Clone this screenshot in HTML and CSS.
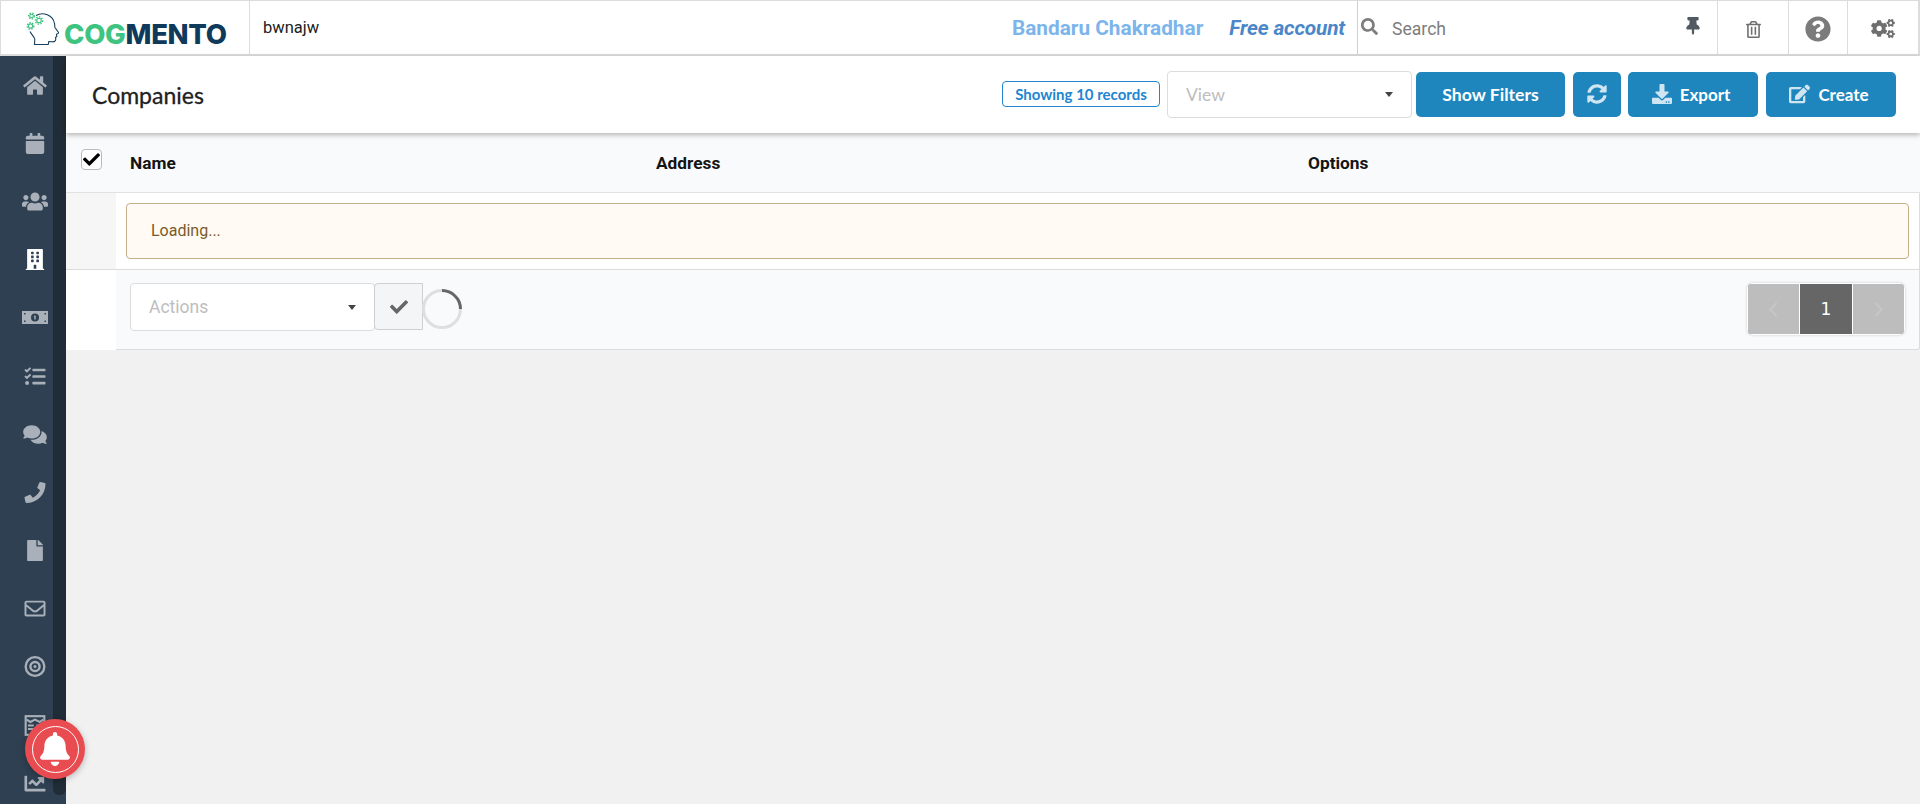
FILE: index.html
```html
<!DOCTYPE html>
<html lang="en">
<head>
<meta charset="utf-8">
<title>Companies - Cogmento</title>
<link rel="stylesheet" href="styles.css">
</head>
<body>
<header class="topbar">
  <div class="brand">
    <svg class="brand-icon" viewBox="0 0 34 34"><path class="head" d="M10 3.500C17-.5 27 3 28.500 11.500c.5 2 0 3 .5 4l3.500 5c.3 1-1.500 1.500-2 1.800l.3 2.200-1.300 1 .3 1.500c0 2-1.500 3-3.500 2.800l-3.500-.3-.6 3H8.500l.3-5.500C8.500 25 5.800 23 4 19.500"/><g class="gear-teeth-g"><circle cx="5.500" cy="4" r="2.900"/><circle cx="13" cy="8.500" r="3.700"/><circle cx="4.500" cy="14" r="3.300"/></g><g class="gear-ring"><circle cx="5.500" cy="4" r="1.800"/><circle cx="13" cy="8.500" r="2.300"/><circle cx="4.500" cy="14" r="2.100"/></g></svg>
    <span class="brand-name"><span class="cog">COG</span><span class="mento">MENTO</span></span>
  </div>
  <div class="workspace">bwnajw</div>
  <div class="account">
    <span class="user-name">Bandaru Chakradhar</span>
    <span class="plan">Free account</span>
  </div>
  <div class="search">
    <svg class="search-icon" viewBox="0 0 512 512"><path d="M505 442.700L405.300 343c-4.500-4.500-10.600-7-17-7H372c27.600-35.300 44-79.700 44-128C416 93.100 322.900 0 208 0S0 93.100 0 208s93.100 208 208 208c48.300 0 92.700-16.400 128-44v16.300c0 6.400 2.500 12.500 7 17l99.700 99.700c9.400 9.400 24.600 9.400 33.900 0l28.300-28.300c9.400-9.400 9.400-24.600.1-34zM208 336c-70.700 0-128-57.200-128-128 0-70.700 57.200-128 128-128 70.700 0 128 57.200 128 128 0 70.700-57.200 128-128 128z"/></svg>
    <span class="search-text">Search</span>
    <svg class="pin-icon" viewBox="0 0 384 512"><path d="M298.028 214.267L285.793 96H328c13.255 0 24-10.745 24-24V24c0-13.255-10.745-24-24-24H56C42.745 0 32 10.745 32 24v48c0 13.255 10.745 24 24 24h42.207L85.972 214.267C37.465 236.820 0 277.261 0 328c0 13.255 10.745 24 24 24h136v104.007c0 1.242.289 2.467.845 3.578l24 48c2.941 5.882 11.364 5.893 14.310 0l24-48a8.008 8.008 0 0 0 .845-3.578V352h136c13.255 0 24-10.745 24-24-.001-51.183-37.983-91.420-85.972-113.733z"/></svg>
  </div>
  <div class="tool tool-trash"><svg class="trash-icon" viewBox="0 0 448 512"><path d="M268 416h24a12 12 0 0 0 12-12V188a12 12 0 0 0-12-12h-24a12 12 0 0 0-12 12v216a12 12 0 0 0 12 12zM432 80h-82.410l-34-56.700A48 48 0 0 0 274.410 0H173.590a48 48 0 0 0-41.160 23.300L98.410 80H16A16 16 0 0 0 0 96v16a16 16 0 0 0 16 16h16v336a48 48 0 0 0 48 48h288a48 48 0 0 0 48-48V128h16a16 16 0 0 0 16-16V96a16 16 0 0 0-16-16zM171.840 50.910A6 6 0 0 1 177 48h94a6 6 0 0 1 5.150 2.910L293.610 80H154.390zM368 464H80V128h288zm-212-48h24a12 12 0 0 0 12-12V188a12 12 0 0 0-12-12h-24a12 12 0 0 0-12 12v216a12 12 0 0 0 12 12z"/></svg></div>
  <div class="tool tool-help"><svg class="help-icon" viewBox="0 0 512 512"><path d="M504 256c0 136.997-111.043 248-248 248S8 392.997 8 256C8 119.083 119.043 8 256 8s248 111.083 248 248zM262.655 90c-54.497 0-89.255 22.957-116.549 63.758-3.536 5.286-2.353 12.415 2.715 16.258l34.699 26.310c5.205 3.947 12.621 3.008 16.665-2.122 17.864-22.658 30.113-35.797 57.303-35.797 20.429 0 45.698 13.148 45.698 32.958 0 14.976-12.363 22.667-32.534 33.976C247.128 238.528 216 254.941 216 296v4c0 6.627 5.373 12 12 12h56c6.627 0 12-5.373 12-12v-1.333c0-28.462 83.186-29.647 83.186-106.667 0-58.002-60.165-102-116.531-102zM256 338c-25.365 0-46 20.635-46 46 0 25.364 20.635 46 46 46s46-20.636 46-46c0-25.365-20.635-46-46-46z"/></svg></div>
  <div class="tool tool-gears"><svg class="gears-icon" viewBox="0 0 640 512"><path d="M512.100 191l-8.200 14.300c-3 5.300-9.400 7.500-15.100 5.400-11.800-4.400-22.600-10.700-32.100-18.600-4.600-3.800-5.800-10.500-2.800-15.700l8.200-14.300c-6.900-8-12.300-17.300-15.900-27.400h-16.500c-6 0-11.200-4.300-12.200-10.300-2-12-2.100-24.600 0-37.100 1-6 6.200-10.400 12.200-10.400h16.500c3.600-10.100 9-19.400 15.900-27.400l-8.200-14.300c-3-5.200-1.900-11.900 2.800-15.700 9.500-7.900 20.400-14.200 32.100-18.600 5.700-2.100 12.100.1 15.100 5.400l8.200 14.300c10.500-1.900 21.200-1.900 31.700 0L552 6.300c3-5.300 9.400-7.500 15.100-5.400 11.800 4.400 22.600 10.700 32.100 18.600 4.600 3.800 5.800 10.500 2.800 15.700l-8.200 14.300c6.900 8 12.300 17.300 15.900 27.400h16.500c6 0 11.200 4.300 12.200 10.300 2 12 2.100 24.600 0 37.100-1 6-6.200 10.400-12.200 10.400h-16.500c-3.600 10.100-9 19.400-15.900 27.400l8.200 14.300c3 5.200 1.900 11.900-2.800 15.700-9.500 7.900-20.400 14.200-32.100 18.600-5.700 2.100-12.100-.1-15.100-5.400l-8.200-14.300c-10.400 1.900-21.200 1.900-31.700 0zm-10.500-58.800c38.500 29.600 82.400-14.300 52.800-52.800-38.500-29.700-82.400 14.300-52.800 52.800zM386.300 286.100l33.700 16.800c10.100 5.800 14.500 18.100 10.500 29.100-8.900 24.200-26.400 46.400-42.600 65.800-7.400 8.900-20.200 11.100-30.300 5.300l-29.100-16.800c-16 13.700-34.600 24.600-54.900 31.700v33.600c0 11.600-8.300 21.600-19.700 23.600-24.600 4.200-50.400 4.400-75.900 0-11.500-2-20-11.900-20-23.600V418c-20.300-7.200-38.900-18-54.900-31.700L74 403c-10 5.800-22.900 3.600-30.300-5.300-16.200-19.400-33.300-41.600-42.200-65.700-4-10.900.4-23.200 10.500-29.100l33.300-16.800c-3.900-20.900-3.900-42.400 0-63.400L12 205.800c-10.100-5.800-14.600-18.100-10.500-29 8.900-24.200 26-46.400 42.200-65.800 7.400-8.900 20.200-11.100 30.300-5.300l29.100 16.800c16-13.700 34.600-24.600 54.900-31.700V57.100c0-11.500 8.200-21.500 19.600-23.500 24.600-4.200 50.500-4.400 76-.1 11.500 2 20 11.900 20 23.600v33.600c20.300 7.200 38.900 18 54.900 31.700l29.100-16.800c10-5.800 22.900-3.600 30.300 5.300 16.200 19.400 33.200 41.600 42.100 65.800 4 10.900.1 23.200-10 29.100l-33.700 16.800c3.900 21 3.900 42.500 0 63.500zm-117.600 21.100c59.200-77-28.700-164.900-105.700-105.700-59.200 77 28.700 164.900 105.700 105.700zm243.400 182.700l-8.200 14.300c-3 5.300-9.400 7.500-15.100 5.400-11.800-4.400-22.600-10.700-32.100-18.600-4.600-3.800-5.800-10.500-2.800-15.700l8.200-14.300c-6.900-8-12.300-17.300-15.900-27.400h-16.500c-6 0-11.200-4.300-12.200-10.300-2-12-2.100-24.600 0-37.100 1-6 6.200-10.400 12.200-10.400h16.500c3.600-10.100 9-19.400 15.900-27.400l-8.200-14.300c-3-5.200-1.900-11.900 2.800-15.700 9.500-7.900 20.400-14.200 32.100-18.600 5.700-2.100 12.100.1 15.100 5.400l8.200 14.300c10.500-1.900 21.200-1.900 31.700 0l8.200-14.300c3-5.300 9.400-7.500 15.100-5.400 11.800 4.400 22.600 10.700 32.100 18.600 4.600 3.800 5.800 10.500 2.800 15.700l-8.200 14.300c6.900 8 12.300 17.300 15.900 27.400h16.500c6 0 11.200 4.300 12.200 10.300 2 12 2.100 24.600 0 37.100-1 6-6.200 10.400-12.200 10.400h-16.500c-3.600 10.100-9 19.400-15.900 27.400l8.200 14.300c3 5.200 1.900 11.900-2.800 15.700-9.500 7.900-20.400 14.200-32.100 18.600-5.700 2.100-12.100-.1-15.100-5.400l-8.200-14.300c-10.400 1.900-21.200 1.900-31.700 0zM501.600 431c38.500 29.600 82.400-14.300 52.800-52.800-38.500-29.600-82.400 14.300-52.800 52.800z"/></svg></div>
</header>

<div class="shell">
  <nav class="sidebar">
    <div class="rail">
      <a class="nav-item"><svg class="nav-icon" viewBox="0 0 576 512"><path d="M280.370 148.260L96 300.110V464a16 16 0 0 0 16 16l112.060-.29a16 16 0 0 0 15.920-16V368a16 16 0 0 1 16-16h64a16 16 0 0 1 16 16v95.640a16 16 0 0 0 16 16.050L464 480a16 16 0 0 0 16-16V300L295.670 148.260a12.190 12.190 0 0 0-15.300 0zM571.600 251.470L488 182.560V44.050a12 12 0 0 0-12-12h-56a12 12 0 0 0-12 12v72.610L318.470 43a48 48 0 0 0-61 0L4.340 251.470a12 12 0 0 0-1.600 16.900l25.500 31A12 12 0 0 0 45.150 301l235.220-193.740a12.190 12.190 0 0 1 15.300 0L530.900 301a12 12 0 0 0 16.900-1.600l25.500-31a12 12 0 0 0-1.700-16.930z"/></svg></a>
      <a class="nav-item"><svg class="nav-icon" viewBox="0 0 448 512"><path d="M12 192h424c6.600 0 12 5.400 12 12v260c0 26.500-21.500 48-48 48H48c-26.500 0-48-21.500-48-48V204c0-6.600 5.400-12 12-12zm436-44v-36c0-26.500-21.500-48-48-48h-48V12c0-6.600-5.400-12-12-12h-40c-6.600 0-12 5.400-12 12v52H160V12c0-6.600-5.400-12-12-12h-40c-6.600 0-12 5.400-12 12v52H48C21.500 64 0 85.500 0 112v36c0 6.600 5.400 12 12 12h424c6.600 0 12-5.400 12-12z"/></svg></a>
      <a class="nav-item"><svg class="nav-icon nav-wide" viewBox="0 0 640 512"><path d="M96 224c35.300 0 64-28.700 64-64s-28.700-64-64-64-64 28.700-64 64 28.700 64 64 64zm448 0c35.300 0 64-28.700 64-64s-28.700-64-64-64-64 28.700-64 64 28.700 64 64 64zm32 32h-64c-17.600 0-33.500 7.100-45.100 18.600 40.300 22.100 68.900 62 75.100 109.400h66c17.700 0 32-14.300 32-32v-32c0-35.300-28.700-64-64-64zm-256 0c61.900 0 112-50.100 112-112S381.900 32 320 32 208 82.100 208 144s50.100 112 112 112zm76.800 32h-8.300c-20.800 10-43.900 16-68.500 16s-47.600-6-68.500-16h-8.300C179.600 288 128 339.600 128 403.200V432c0 26.500 21.500 48 48 48h288c26.500 0 48-21.500 48-48v-28.800c0-63.600-51.600-115.200-115.200-115.200zm-223.700-13.400C161.500 263.100 145.600 256 128 256H64c-35.300 0-64 28.700-64 64v32c0 17.700 14.300 32 32 32h65.900c6.300-47.400 34.900-87.300 75.200-109.400z"/></svg></a>
      <a class="nav-item"><svg class="nav-icon nav-active" viewBox="0 0 448 512"><path d="M436 480h-20V24c0-13.255-10.745-24-24-24H56C42.745 0 32 10.745 32 24v456H12c-6.627 0-12 5.373-12 12v20h448v-20c0-6.627-5.373-12-12-12zM128 76c0-6.627 5.373-12 12-12h40c6.627 0 12 5.373 12 12v40c0 6.627-5.373 12-12 12h-40c-6.627 0-12-5.373-12-12V76zm0 96c0-6.627 5.373-12 12-12h40c6.627 0 12 5.373 12 12v40c0 6.627-5.373 12-12 12h-40c-6.627 0-12-5.373-12-12v-40zm52 148h-40c-6.627 0-12-5.373-12-12v-40c0-6.627 5.373-12 12-12h40c6.627 0 12 5.373 12 12v40c0 6.627-5.373 12-12 12zm76 160h-64v-84c0-6.627 5.373-12 12-12h40c6.627 0 12 5.373 12 12v84zm64-172c0 6.627-5.373 12-12 12h-40c-6.627 0-12-5.373-12-12v-40c0-6.627 5.373-12 12-12h40c6.627 0 12 5.373 12 12v40zm0-96c0 6.627-5.373 12-12 12h-40c-6.627 0-12-5.373-12-12v-40c0-6.627 5.373-12 12-12h40c6.627 0 12 5.373 12 12v40zm0-96c0 6.627-5.373 12-12 12h-40c-6.627 0-12-5.373-12-12V76c0-6.627 5.373-12 12-12h40c6.627 0 12 5.373 12 12v40z"/></svg></a>
      <a class="nav-item"><svg class="nav-icon nav-wide" viewBox="0 0 26 13"><path fill-rule="evenodd" d="M0 0h26v13H0zM2 2v1.500h1.500V2zM22.500 2v1.500H24V2zM2 9.500V11h1.500V9.500zM22.500 9.500V11H24V9.500zM13 2.500a4 4 0 1 0 0 8 4 4 0 0 0 0-8zM12.500 4.500h1.200v4h-1.400V5.700l-.8.200z"/></svg></a>
      <a class="nav-item"><svg class="nav-icon" viewBox="0 0 512 512"><path d="M139.610 35.500a12 12 0 0 0-17 0L58.930 98.810l-22.700-22.120a12 12 0 0 0-17 0L3.530 92.410a12 12 0 0 0 0 17l47.590 47.400a12.780 12.780 0 0 0 17.610 0l15.590-15.620L156.520 69a12.090 12.090 0 0 0 .090-17zm0 159.190a12 12 0 0 0-17 0l-63.680 63.720-22.700-22.100a12 12 0 0 0-17 0L3.530 252a12 12 0 0 0 0 17L51 316.500a12.770 12.770 0 0 0 17.600 0l15.700-15.690 72.200-72.220a12 12 0 0 0 .090-16.900zM64 368c-26.490 0-48.590 21.500-48.590 48S37.530 464 64 464a48 48 0 0 0 0-96zm432 16H208a16 16 0 0 0-16 16v32a16 16 0 0 0 16 16h288a16 16 0 0 0 16-16v-32a16 16 0 0 0-16-16zm0-320H208a16 16 0 0 0-16 16v32a16 16 0 0 0 16 16h288a16 16 0 0 0 16-16V80a16 16 0 0 0-16-16zm0 160H208a16 16 0 0 0-16 16v32a16 16 0 0 0 16 16h288a16 16 0 0 0 16-16v-32a16 16 0 0 0-16-16z"/></svg></a>
      <a class="nav-item"><svg class="nav-icon" viewBox="0 0 576 512"><path d="M416 192c0-88.400-93.100-160-208-160S0 103.600 0 192c0 34.300 14.100 65.900 38 92-13.400 30.200-35.500 54.200-35.800 54.500-2.200 2.300-2.800 5.700-1.500 8.700S4.800 352 8 352c36.600 0 66.900-12.300 88.700-25 32.200 15.700 70.300 25 111.300 25 114.900 0 208-71.600 208-160zm122 220c23.900-26 38-57.700 38-92 0-66.900-53.500-124.200-129.300-148.100.9 6.600 1.300 13.300 1.300 20.100 0 105.900-107.700 192-240 192-10.800 0-21.300-.8-31.700-1.900C207.800 439.600 281.800 480 368 480c41 0 79.100-9.200 111.300-25 21.800 12.700 52.100 25 88.700 25 3.200 0 6.100-1.900 7.300-4.800 1.300-2.900.7-6.300-1.500-8.700-.3-.3-22.400-24.200-35.800-54.500z"/></svg></a>
      <a class="nav-item"><svg class="nav-icon nav-phone" viewBox="0 0 512 512"><path d="M493.400 24.600l-104-24c-11.300-2.600-22.900 3.300-27.500 13.900l-48 112c-4.200 9.800-1.400 21.300 6.900 28l60.600 49.600c-36 76.700-98.900 140.500-177.200 177.200l-49.600-60.600c-6.800-8.300-18.200-11.100-28-6.900l-112 48C3.900 366.500-2 378.100.6 389.400l24 104C27.100 504.200 36.700 512 48 512c256.100 0 464-207.500 464-464 0-11.200-7.700-20.900-18.600-23.400z"/></svg></a>
      <a class="nav-item"><svg class="nav-icon" viewBox="0 0 384 512"><path d="M224 136V0H24C10.700 0 0 10.700 0 24v464c0 13.300 10.700 24 24 24h336c13.300 0 24-10.700 24-24V160H248c-13.200 0-24-10.800-24-24zm160-14.100v6.100H256V0h6.100c6.400 0 12.500 2.500 17 7l97.900 98c4.500 4.500 7 10.600 7 16.900z"/></svg></a>
      <a class="nav-item"><svg class="nav-icon" viewBox="0 0 512 512"><path d="M464 64H48C21.490 64 0 85.490 0 112v288c0 26.510 21.490 48 48 48h416c26.510 0 48-21.490 48-48V112c0-26.510-21.490-48-48-48zm0 48v40.805c-22.422 18.259-58.168 46.651-134.587 106.490-16.841 13.247-50.201 45.072-73.413 44.701-23.208.375-56.579-31.459-73.413-44.701C106.180 199.465 70.425 171.067 48 152.805V112h416zM48 400V214.398c22.914 18.251 55.409 43.862 104.938 82.646 21.857 17.205 60.134 55.186 103.062 54.955 42.717.231 80.509-37.199 103.053-54.947 49.528-38.783 82.032-64.401 104.947-82.653V400H48z"/></svg></a>
      <a class="nav-item"><svg class="nav-icon" viewBox="0 0 20 20"><path fill-rule="evenodd" d="M10 0a10 10 0 1 1 0 20 10 10 0 0 1 0-20zM10 2.200a7.800 7.800 0 1 0 0 15.600 7.800 7.800 0 0 0 0-15.600zM10 4.500a5.500 5.500 0 1 1 0 11 5.500 5.500 0 0 1 0-11zM10 6.800a3.200 3.200 0 1 0 0 6.400 3.200 3.200 0 0 0 0-6.400zM10 8.500a1.500 1.500 0 1 1 0 3 1.500 1.500 0 0 1 0-3z"/></svg></a>
      <a class="nav-item"><svg class="nav-icon nav-line" viewBox="0 0 18 18"><rect x="1" y="1" width="16" height="16"/><path d="M2 4l3 2 4-2 4 2 3-2M3 9h5M3 12h5M10 9h5M10 12h5"/></svg></a>
      <a class="nav-item"><svg class="nav-icon" viewBox="0 0 512 512"><path d="M496 384H64V80c0-8.840-7.160-16-16-16H16C7.160 64 0 71.160 0 80v336c0 17.670 14.330 32 32 32h464c8.840 0 16-7.160 16-16v-32c0-8.840-7.160-16-16-16zM464 96H345.940c-21.380 0-32.090 25.850-16.970 40.970l32.400 32.400L288 242.750l-73.370-73.370c-12.500-12.500-32.760-12.500-45.250 0l-68.690 68.690c-6.250 6.250-6.250 16.380 0 22.630l22.620 22.620c6.250 6.250 16.380 6.250 22.630 0L192 237.250l73.370 73.370c12.500 12.500 32.760 12.500 45.250 0l96-96 32.400 32.400c15.120 15.120 40.970 4.410 40.970-16.970V112c0-8.840-7.160-16-16-16z"/></svg></a>
    </div>
    <div class="scroll-thumb"></div>
  </nav>

  <main class="content">
    <section class="page-head">
      <h1 class="page-title">Companies</h1>
      <div class="head-actions">
        <span class="count-pill">Showing 10 records</span>
        <div class="select view-select"><span>View</span><i class="caret"></i></div>
        <button class="btn btn-filters">Show Filters</button>
        <button class="btn btn-icon"><svg class="btn-svg" viewBox="0 0 512 512"><path d="M370.720 133.280C339.458 104.008 298.888 87.962 255.848 88c-77.458.068-144.328 53.178-162.791 126.850-1.344 5.363-6.122 9.150-11.651 9.150H24.103c-7.498 0-13.194-6.807-11.807-14.176C33.933 94.924 134.813 8 256 8c66.448 0 126.791 26.136 171.315 68.685L463.030 40.970C478.149 25.851 504 36.559 504 57.941V192c0 13.255-10.745 24-24 24H345.941c-21.382 0-32.090-25.851-16.971-40.971l41.750-41.749zM32 296h134.059c21.382 0 32.090 25.851 16.971 40.971l-41.750 41.750c31.262 29.273 71.835 45.319 114.876 45.280 77.418-.07 144.315-53.144 162.787-126.849 1.344-5.363 6.122-9.150 11.651-9.150h57.304c7.498 0 13.194 6.807 11.807 14.176C478.067 417.076 377.187 504 256 504c-66.448 0-126.791-26.136-171.315-68.685L48.970 471.030C33.851 486.149 8 475.441 8 454.059V320c0-13.255 10.745-24 24-24z"/></svg></button>
        <button class="btn btn-export"><svg class="btn-svg" viewBox="0 0 512 512"><path d="M216 0h80c13.300 0 24 10.700 24 24v168h87.700c17.800 0 26.700 21.500 14.100 34.100L269.700 378.300c-7.500 7.500-19.800 7.500-27.300 0L90.100 226.100c-12.600-12.600-3.700-34.100 14.100-34.100H192V24c0-13.300 10.700-24 24-24zm296 376v112c0 13.300-10.700 24-24 24H24c-13.300 0-24-10.700-24-24V376c0-13.300 10.700-24 24-24h146.700l49 49c20.100 20.100 52.500 20.100 72.600 0l49-49H488c13.300 0 24 10.700 24 24zm-124 88c0-11-9-20-20-20s-20 9-20 20 9 20 20 20 20-9 20-20zm64 0c0-11-9-20-20-20s-20 9-20 20 9 20 20 20 20-9 20-20z"/></svg>Export</button>
        <button class="btn btn-create"><svg class="btn-svg btn-svg-wide" viewBox="0 0 576 512"><path d="M402.600 83.200l90.200 90.200c3.800 3.800 3.800 10 0 13.800L274.400 405.600l-92.800 10.300c-12.400 1.400-22.900-9.100-21.500-21.500l10.300-92.800L388.800 83.200c3.800-3.800 10-3.800 13.800 0zm162-22.900l-48.800-48.800c-15.200-15.200-39.900-15.200-55.200 0l-35.400 35.400c-3.800 3.800-3.800 10 0 13.800l90.200 90.200c3.800 3.800 10 3.800 13.800 0l35.400-35.400c15.200-15.300 15.200-40 0-55.200zM384 346.200V448H64V128h229.800c3.200 0 6.200-1.300 8.500-3.500l40-40c7.600-7.600 2.200-20.500-8.500-20.500H48C21.500 64 0 85.500 0 112v352c0 26.500 21.500 48 48 48h352c26.500 0 48-21.500 48-48V306.200c0-10.700-12.900-16-20.500-8.500l-40 40c-2.200 2.300-3.500 5.300-3.500 8.500z"/></svg>Create</button>
      </div>
    </section>

    <section class="grid">
      <div class="grid-head">
        <div class="col-check"><span class="checkbox"><svg class="check-svg" viewBox="0 0 512 512"><path d="M173.898 439.404l-166.400-166.400c-9.997-9.997-9.997-26.206 0-36.204l36.203-36.204c9.997-9.998 26.207-9.998 36.204 0L192 312.690 432.095 72.596c9.997-9.997 26.207-9.997 36.204 0l36.203 36.204c9.997 9.997 9.997 26.206 0 36.204l-294.400 294.401c-9.998 9.997-26.207 9.997-36.204-.001z"/></svg></span></div>
        <div class="col col-name">Name</div>
        <div class="col col-address">Address</div>
        <div class="col col-options">Options</div>
      </div>
      <div class="grid-row">
        <div class="row-gutter"></div>
        <div class="row-body"><div class="notice">Loading...</div></div>
      </div>
      <div class="grid-foot">
        <div class="foot-gutter"></div>
        <div class="foot-body">
          <div class="select actions-select"><span>Actions</span><i class="caret"></i></div>
          <button class="apply-btn"><svg class="apply-svg" viewBox="0 0 512 512"><path d="M173.898 439.404l-166.400-166.400c-9.997-9.997-9.997-26.206 0-36.204l36.203-36.204c9.997-9.998 26.207-9.998 36.204 0L192 312.690 432.095 72.596c9.997-9.997 26.207-9.997 36.204 0l36.203 36.204c9.997 9.997 9.997 26.206 0 36.204l-294.400 294.401c-9.998 9.997-26.207 9.997-36.204-.001z"/></svg></button>
          <span class="spinner"></span>
          <div class="pager">
            <span class="page-cell page-side"><svg class="chev" viewBox="0 0 8 14"><path d="M7 1L1 7l6 6"/></svg></span>
            <span class="page-cell page-current">1</span>
            <span class="page-cell page-side"><svg class="chev" viewBox="0 0 8 14"><path d="M1 1l6 6-6 6"/></svg></span>
          </div>
        </div>
      </div>
    </section>
  </main>
</div>

<div class="bell-badge"><span class="bell-ring"><svg class="bell-svg" viewBox="0 0 448 512"><path d="M224 512c35.320 0 63.970-28.650 63.970-64H160.030c0 35.350 28.650 64 63.970 64zm215.390-149.710c-19.320-20.760-55.470-51.990-55.470-154.290 0-77.700-54.480-139.900-127.940-155.160V32c0-17.670-14.320-32-31.980-32s-31.980 14.330-31.980 32v20.840C118.560 68.100 64.080 130.300 64.080 208c0 102.300-36.150 133.530-55.470 154.290-6 6.450-8.660 14.160-8.610 21.710.11 16.400 12.980 32 32.100 32h383.800c19.120 0 32-15.600 32.100-32 .05-7.550-2.610-15.270-8.610-21.710z"/></svg></span></div>
</body>
</html>
```

FILE: styles.css
```css
* { box-sizing: border-box; }
html, body { margin: 0; height: 100%; overflow: hidden; }
body { background: #f1f1f1; font-family: Roboto, "Liberation Sans", sans-serif; color: #212121; position: relative; }

/* top bar */
.topbar { height: 56px; display: flex; align-items: stretch; background: #fff; border: 1px solid #dcdcdc; border-bottom: 2px solid #dcdcdc; border-right-width: 2px; }
.brand { width: 249px; flex: none; border-right: 1px solid #dcdcdc; display: flex; align-items: flex-start; padding: 11px 0 0 25px; }
.brand-icon { width: 34px; height: 34px; flex: none; }
.head { fill: none; stroke: #17405f; stroke-width: 1.100; }
.gear-teeth-g { fill: none; stroke: #3fc380; stroke-width: 1.300; stroke-dasharray: 1.500 1.300; }
.gear-ring { fill: none; stroke: #3fc380; stroke-width: 1.100; }
.brand-name { font-family: Inter, "Liberation Sans", sans-serif; font-weight: 800; font-size: 27.500px; line-height: 27px; margin: 9px 0 0 4px; letter-spacing: -.3px; }
.cog { color: #3fc380; }
.mento { color: #0f3a5b; }
.workspace { width: 300px; flex: none; padding: 0 0 0 13px; font-size: 16.500px; line-height: 54px; color: #212121; }
.account { flex: 1; display: flex; justify-content: flex-end; align-items: center; gap: 26px; padding: 0 12px 0 0; font-size: 20.800px; font-weight: 700; }
.user-name { color: #7cb5ec; }
.plan { color: #4a86c8; font-style: italic; letter-spacing: -.15px; }
.search { width: 361px; flex: none; border-left: 1px solid #cfcfcf; border-right: 1px solid #dcdcdc; display: flex; align-items: center; padding: 0 17px 0 3px; }
.search-icon { width: 17px; height: 17px; fill: #7d7d7d; flex: none; margin: 0 0 3px; }
.search-text { flex: 1; padding: 2px 0 0 14px; font-size: 17.600px; color: #7d7d7d; }
.pin-icon { width: 14px; height: 18px; fill: #515a63; flex: none; margin-bottom: 3px; }
.tool { display: flex; align-items: center; justify-content: center; border-right: 1px solid #dcdcdc; flex: none; }
.tool-trash { width: 71px; }
.tool-help { width: 59px; }
.tool-gears { width: 70px; border-right: 0; }
.trash-icon { width: 15px; height: 17px; fill: #6f6f6f; margin-top: 3px; }
.help-icon { width: 26px; height: 26px; margin-top: 3px; fill: #7b7b7b; }
.gears-icon { width: 24px; height: 19px; fill: #6f6f6f; margin-top: 1px; }

/* shell */
.shell { display: flex; height: calc(100% - 56px); }
.sidebar { width: 66px; flex: none; background: #2e4051; display: flex; }
.rail { width: 53px; flex: none; display: flex; flex-direction: column; }
.nav-item { height: 58.200px; flex: none; display: flex; align-items: center; justify-content: center; padding-left: 17px; }
.nav-icon { width: 24px; height: 21px; flex: none; fill: #a9b0b9; }
.nav-wide { width: 26px; }
.nav-active { fill: #fff; }
.nav-line { fill: none; stroke: #a9b0b9; stroke-width: 1.800; }
.scroll-thumb { width: 13px; height: 739px; flex: none; background: #202c37; border-radius: 0 0 6px 6px; }

.content { flex: 1; min-width: 0; }
.page-head { height: 77px; background: #fff; display: flex; align-items: center; padding: 0 24px 0 26px; box-shadow: 0 2px 5px rgba(0,0,0,.28); position: relative; }
.page-title { margin: 0; font-family: Lato, "Liberation Sans", sans-serif; font-size: 23px; font-weight: 400; -webkit-text-stroke: .3px #212121; color: #212121; flex: 1; }
.head-actions { display: flex; align-items: center; gap: 7px; margin-top: -1px; }
.count-pill { width: 158px; height: 26px; border: 1px solid #2185d0; border-radius: 4px; color: #2185d0; font-family: Lato, "Liberation Sans", sans-serif; font-weight: 700; font-size: 15px; line-height: 24px; text-align: center; }
.select { display: flex; align-items: center; justify-content: space-between; background: #fff; border: 1px solid #dcdcdc; border-radius: 4px; color: #bdbdbd; font-size: 17.500px; }
.view-select { width: 245px; height: 47px; padding: 0 18px; font-family: Lato, "Liberation Sans", sans-serif; margin-right: -3px; }
.caret { width: 0; height: 0; border: 4.500px solid transparent; border-top: 5px solid #444; border-bottom: 0; }
.btn { height: 45px; border: 0; border-radius: 5px; background: #1f86bd; color: #fff; font-family: Lato, "Liberation Sans", sans-serif; font-weight: 700; font-size: 17px; display: flex; align-items: center; justify-content: center; gap: 8px; padding: 0; }
.btn-filters { width: 149px; font-size: 17.600px; }
.btn-icon { width: 48px; margin-left: 1px; }
.btn-export { width: 130px; padding-right: 4px; }
.btn-create { width: 130px; margin-left: 1px; padding-right: 4px; }
.btn-svg { width: 20px; height: 20px; fill: #cfe5f2; }
.btn-svg-wide { width: 21px; }

/* grid */
.grid-head { height: 60px; background: #f9fafb; border-bottom: 1px solid #e0e2e4; display: flex; align-items: center; font-family: Roboto, "Liberation Sans", sans-serif; font-weight: 700; font-size: 17.300px; color: #141414; }
.col-check { width: 64px; flex: none; padding: 0 0 6px 15px; }
.checkbox { display: block; width: 21px; height: 21px; background: #fff; border: 1px solid #bbb; border-radius: 4px; padding: 0 1px; }
.check-svg { display: block; width: 17px; height: 19px; fill: #000; }
.col-name { width: 526px; flex: none; }
.col-address { width: 652px; flex: none; }
.grid-row { height: 77px; display: flex; border-bottom: 1px solid #dcdcdc; }
.row-gutter { width: 50px; flex: none; background: #f6f6f6; }
.row-body { flex: 1; background: #fff; padding: 10px 10px 0; border-right: 1px solid #dcdcdc; }
.notice { height: 56px; background: #fffaf3; border: 1px solid #c4b08a; border-radius: 4px; padding-left: 24px; font-size: 16px; line-height: 53px; color: #7a5a2a; }
.grid-foot { height: 80px; display: flex; }
.foot-gutter { width: 50px; flex: none; background: #fff; }
.foot-body { flex: 1; display: flex; align-items: flex-start; background: #f9fafb; border-bottom: 1px solid #dcdcdc; border-right: 1px solid #dcdcdc; border-radius: 0 0 3px 0; padding: 13px 14px 0 14px; }
.actions-select { width: 245px; height: 48px; padding: 0 18px; }
.apply-btn { width: 49px; height: 47px; flex: none; margin-left: -1px; background: #f4f5f7; border: 1px solid #cfcfcf; border-radius: 4px 0 0 4px; padding: 0; display: flex; align-items: center; justify-content: center; }
.apply-svg { width: 18px; height: 18px; fill: #666; }
.spinner { width: 40px; height: 40px; flex: none; margin: 6px 0 0 -1px; border-radius: 50%; border: 3px solid #dfdfdf; position: relative; }
.spinner::after { content: ""; position: absolute; inset: -3px; border-radius: 50%; border: 3px solid transparent; border-right-color: #666; transform: rotate(-45deg); }
.pager { margin-left: auto; display: flex; height: 52px; padding: 1px; background: #fff; border-radius: 6px; box-shadow: 0 0 3px rgba(0,0,0,.2); gap: 1px; overflow: hidden; }
.page-cell { width: 51px; display: flex; align-items: center; justify-content: center; background: #bdbdbd; }
.page-current { width: 52px; background: #666; color: #fff; font-size: 17px; font-family: "DejaVu Sans", sans-serif; }
.chev { width: 9px; height: 15px; fill: none; stroke: #c6c6c6; stroke-width: 2; }

/* floating bell */
.bell-badge { position: absolute; left: 25px; top: 719px; width: 60px; height: 60px; border-radius: 50%; background: #e84c50; box-shadow: 0 2px 6px rgba(0,0,0,.25); display: flex; align-items: center; justify-content: center; }
.bell-ring { width: 47px; height: 47px; border-radius: 50%; border: 1.500px solid #fff; display: flex; align-items: center; justify-content: center; }
.bell-svg { width: 30px; height: 34px; fill: #fff; }
```
